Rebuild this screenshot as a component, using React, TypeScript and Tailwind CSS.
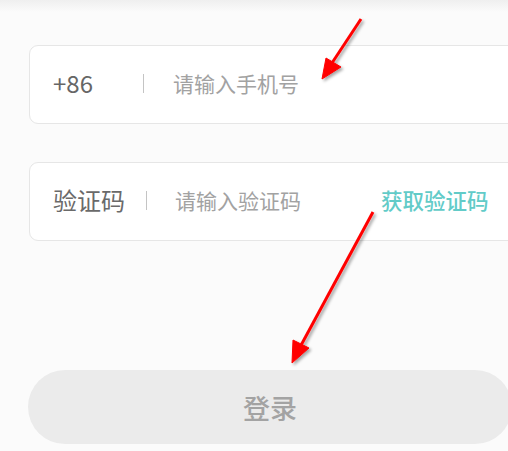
export default function App() {
  const font = { fontFamily: '"Noto Sans CJK SC", "Noto Sans", sans-serif' };

  return (
    <div
      className="relative w-[508px] h-[451px] overflow-hidden bg-[#fbfbfb]"
      style={font}
    >
      <div className="h-[12px] bg-gradient-to-b from-[#efefef] to-[#fbfbfb]" />

      <div className="pl-[29px] pt-[33px] flex flex-col">
        {/* phone */}
        <div className="w-[500px] h-[79px] flex items-center bg-white border border-[#e6e6e6] rounded-[9px] pl-[23px] pb-[3px]">
          <span className="w-[90px] text-[24px] text-[#666666] leading-none">+86</span>
          <div className="w-px h-[19px] bg-[#c4c4c4]" />
          <span className="ml-[29px] text-[21px] text-[#a2a2a2] leading-none">请输入手机号</span>
        </div>

        {/* code */}
        <div className="mt-[38px] w-[500px] h-[79px] flex items-center bg-white border border-[#e6e6e6] rounded-[9px] pl-[23px] pb-[3px]">
          <span className="text-[24px] text-[#6a6a6a] leading-none">验证码</span>
          <div className="ml-[21px] w-px h-[19px] bg-[#c4c4c4]" />
          <span className="ml-[28px] text-[21px] text-[#a2a2a2] leading-none">请输入验证码</span>
          <span className="ml-[80px] text-[21.5px] font-medium text-[#62cbc8] leading-none">获取验证码</span>
        </div>

        {/* login */}
        <div className="mt-[129px] -ml-px w-[484px] h-[74px] flex items-center justify-center bg-[#ebebeb] rounded-full">
          <span className="text-[27px] font-medium text-[#a3a3a3] leading-none">登录</span>
        </div>
      </div>

      {/* red annotation arrows */}
      <svg className="absolute inset-0 pointer-events-none" width="508" height="451">
        <defs>
          <filter id="sh" x="-20%" y="-20%" width="140%" height="140%">
            <feDropShadow dx="2" dy="2" stdDeviation="1.5" floodColor="#000" floodOpacity="0.35" />
          </filter>
        </defs>
        <g filter="url(#sh)" fill="#ff0000" stroke="#ff0000">
          <line x1="361" y1="19" x2="330" y2="66" strokeWidth="3" />
          <polygon points="322,79 326,58 341,67" strokeWidth="1" />
          <line x1="373" y1="212" x2="299" y2="349" strokeWidth="3" />
          <polygon points="292,363 293,340 309,348" strokeWidth="1" />
        </g>
      </svg>
    </div>
  );
}
